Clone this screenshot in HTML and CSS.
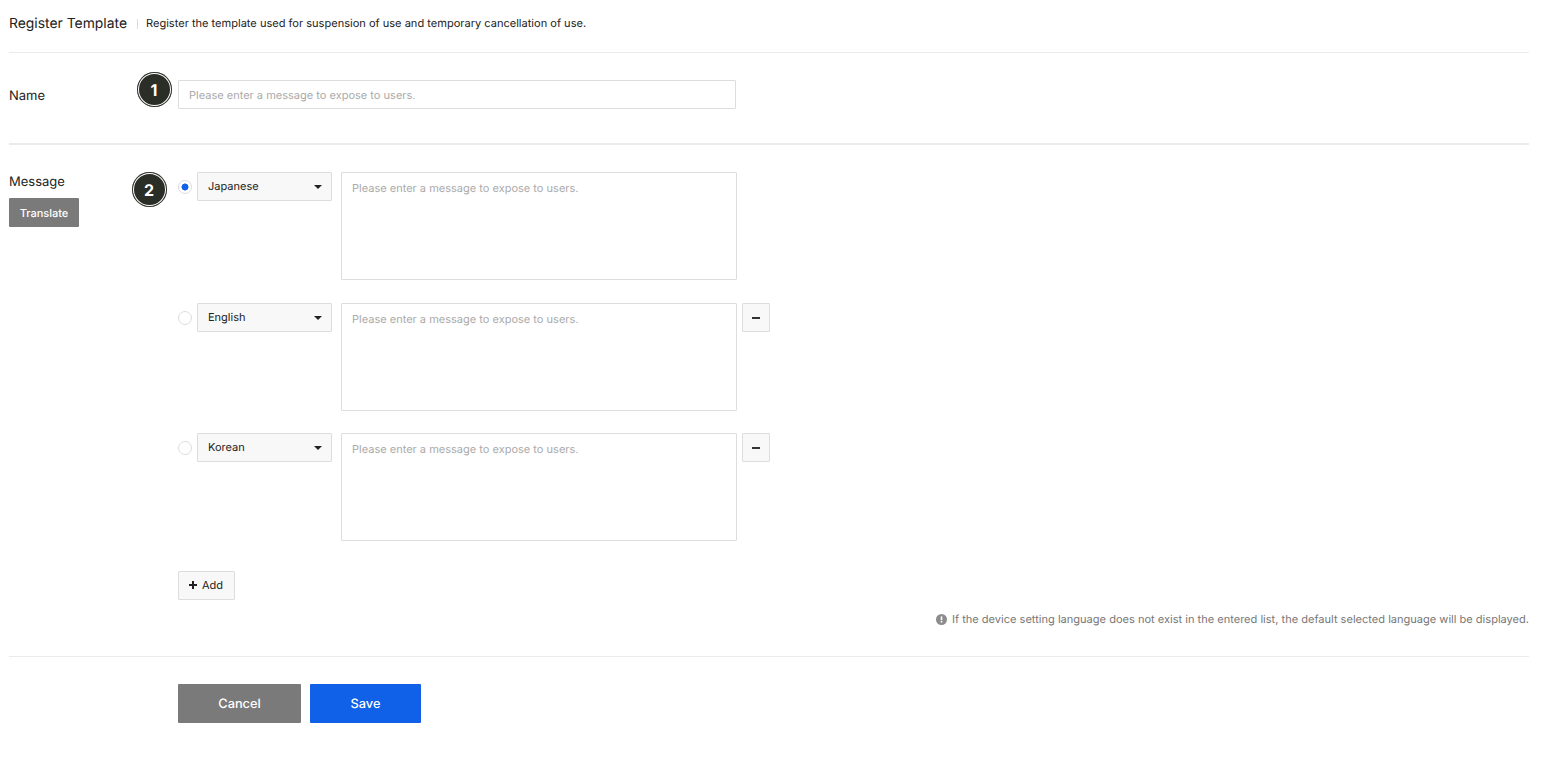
FILE: index.html
```html
<!DOCTYPE html>
<html lang="en">
<head>
    <meta charset="UTF-8">
    <meta name="viewport" content="width=device-width, initial-scale=1.0">
    <title>Register Template</title>
    <link rel="stylesheet" href="styles.css">
</head>
<body>
    <div class="page">
        <div class="header">
            <h1 class="title">Register Template</h1>
            <p class="desc">Register the template used for suspension of use and temporary cancellation of use.</p>
        </div>

        <div class="row row-name">
            <div class="label-col"><label class="label">Name</label></div>
            <div class="field-col">
                <input class="input" type="text" placeholder="Please enter a message to expose to users.">
            </div>
            <span class="badge badge-one">1</span>
        </div>

        <div class="row row-message">
            <div class="label-col">
                <label class="label">Message</label>
                <button class="btn-translate">Translate</button>
            </div>
            <div class="field-col">
                <div class="lang lang-first">
                    <span class="radio checked"></span>
                    <div class="select">Japanese<span class="caret"></span></div>
                    <textarea class="textarea" placeholder="Please enter a message to expose to users."></textarea>
                </div>
                <div class="lang lang-second">
                    <span class="radio"></span>
                    <div class="select">English<span class="caret"></span></div>
                    <textarea class="textarea" placeholder="Please enter a message to expose to users."></textarea>
                    <button class="btn-minus"><svg width="10" height="10" viewBox="0 0 10 10"><rect x="1" y="4" width="8" height="2" fill="#333"/></svg></button>
                </div>
                <div class="lang">
                    <span class="radio"></span>
                    <div class="select">Korean<span class="caret"></span></div>
                    <textarea class="textarea" placeholder="Please enter a message to expose to users."></textarea>
                    <button class="btn-minus"><svg width="10" height="10" viewBox="0 0 10 10"><rect x="1" y="4" width="8" height="2" fill="#333"/></svg></button>
                </div>
                <button class="btn-add"><svg width="8" height="8" viewBox="0 0 8 8"><path d="M3 0h2v3h3v2H5v3H3V5H0V3h3z" fill="#222"/></svg>Add</button>
                <p class="note">
                    <svg width="11" height="11" viewBox="0 0 11 11"><circle cx="5.5" cy="5.5" r="5.5" fill="#8c8c8c"/><rect x="4.7" y="2.4" width="1.6" height="3.8" fill="#fff"/><rect x="4.7" y="7" width="1.6" height="1.6" fill="#fff"/></svg>
                    If the device setting language does not exist in the entered list, the default selected language will be displayed.
                </p>
            </div>
            <span class="badge badge-two">2</span>
        </div>

        <div class="actions">
            <button class="btn btn-cancel">Cancel</button>
            <button class="btn btn-save">Save</button>
        </div>
    </div>
</body>
</html>
```

FILE: styles.css
```css
* {
    box-sizing: border-box;
}

body {
    margin: 0;
    background: #fff;
    color: #222;
    font-family: Inter, "Liberation Sans", sans-serif;
    text-rendering: geometricPrecision;
}

button,
input,
textarea {
    text-rendering: geometricPrecision;
}

button {
    font-family: inherit;
    cursor: pointer;
}

.page {
    width: 1520px;
    margin-left: 9px;
}

.header {
    display: flex;
    align-items: center;
    height: 53px;
    padding-bottom: 5px;
    border-bottom: 1px solid #ebebeb;
}

.title {
    margin: 0;
    font-size: 13.9px;
    font-weight: 400;
    line-height: 20px;
}

.desc {
    margin: 0 0 0 10px;
    padding-left: 9px;
    font-size: 11.05px;
    line-height: 11px;
    background: linear-gradient(#ddd, #ddd) left center / 1px 10px no-repeat;
}

.row {
    position: relative;
    display: flex;
}

.row-name {
    height: 92px;
    padding-top: 27px;
    border-bottom: 2px solid #ebebeb;
}

.row-message {
    height: 512px;
    padding-top: 27px;
    border-bottom: 1px solid #ebebeb;
}

.label-col {
    width: 169px;
    flex: none;
}

.label {
    display: block;
    font-size: 13px;
    line-height: 33px;
}

.row-message .label {
    margin-top: 1px;
    line-height: 18px;
}

.field-col {
    flex: 1;
}

.input {
    display: block;
    width: 558px;
    height: 29px;
    padding: 0 10px;
    border: 1px solid #ddd;
    border-radius: 1px;
    font-family: inherit;
    font-size: 11.03px;
}

.input::placeholder,
.textarea::placeholder {
    color: #aaa;
    opacity: 1;
}

.btn-translate {
    display: block;
    width: 70px;
    height: 29px;
    margin-top: 7px;
    padding: 0;
    border: 0;
    border-radius: 1px;
    background: #7a7a7a;
    color: #fff;
    font-size: 11px;
    font-weight: 500;
}

.lang {
    display: flex;
    align-items: flex-start;
    height: 108px;
}

.lang-first {
    margin-bottom: 23px;
}

.lang-second {
    margin-bottom: 22px;
}

.radio {
    flex: none;
    width: 14px;
    height: 14px;
    margin: 8px 5px 0 0;
    border: 1px solid #ddd;
    border-radius: 50%;
    background: #fff;
}

.radio.checked {
    background: radial-gradient(circle, #1160e8 0 3.2px, #fff 3.8px);
}

.select {
    display: flex;
    align-items: center;
    justify-content: space-between;
    flex: none;
    width: 135px;
    height: 29px;
    padding: 0 9px 2px 10px;
    margin-right: 9px;
    border: 1px solid #ddd;
    border-radius: 1px;
    background: #f8f8f8;
    font-size: 11px;
}

.caret {
    width: 0;
    height: 0;
    margin-top: 2px;
    border-left: 4px solid transparent;
    border-right: 4px solid transparent;
    border-top: 4px solid #222;
}

.textarea {
    display: block;
    flex: none;
    width: 396px;
    height: 108px;
    padding: 8px 10px;
    border: 1px solid #ddd;
    border-radius: 1px;
    font-family: inherit;
    font-size: 11.03px;
    line-height: 14px;
    resize: none;
}

.btn-minus {
    display: flex;
    align-items: center;
    justify-content: center;
    width: 28px;
    height: 29px;
    margin-left: 5px;
    padding: 0;
    border: 1px solid #ddd;
    border-radius: 1px;
    background: #f8f8f8;
}

.btn-add {
    display: flex;
    align-items: center;
    gap: 5px;
    width: 57px;
    height: 29px;
    margin-top: 30px;
    padding: 0 0 2px 10px;
    border: 1px solid #ddd;
    border-radius: 1px;
    background: #f8f8f8;
    color: #222;
    font-size: 11px;
}

.note {
    display: flex;
    align-items: center;
    justify-content: flex-end;
    gap: 5px;
    margin: 12px 0 0;
    color: #777;
    font-size: 11.06px;
    line-height: 14px;
}

.badge {
    position: absolute;
    display: flex;
    align-items: center;
    justify-content: center;
    width: 35px;
    height: 35px;
    padding-right: 1px;
    border-radius: 50%;
    background: #2b2d27;
    box-shadow: inset 0 0 0 1px #2b2d27, inset 0 0 0 2px #fff;
    color: #fff;
    font-size: 16px;
    font-weight: 700;
}

.badge-one {
    left: 128px;
    top: 19px;
}

.badge-two {
    left: 123px;
    top: 27px;
}

.actions {
    display: flex;
    gap: 9px;
    padding: 27px 0 0 169px;
}

.btn {
    height: 39px;
    padding: 1px 0 0;
    border: 0;
    border-radius: 1px;
    color: #fff;
    font-size: 12.8px;
    font-weight: 500;
}

.btn-cancel {
    width: 123px;
    background: #7a7a7a;
}

.btn-save {
    width: 111px;
    background: #1160e8;
}
```
